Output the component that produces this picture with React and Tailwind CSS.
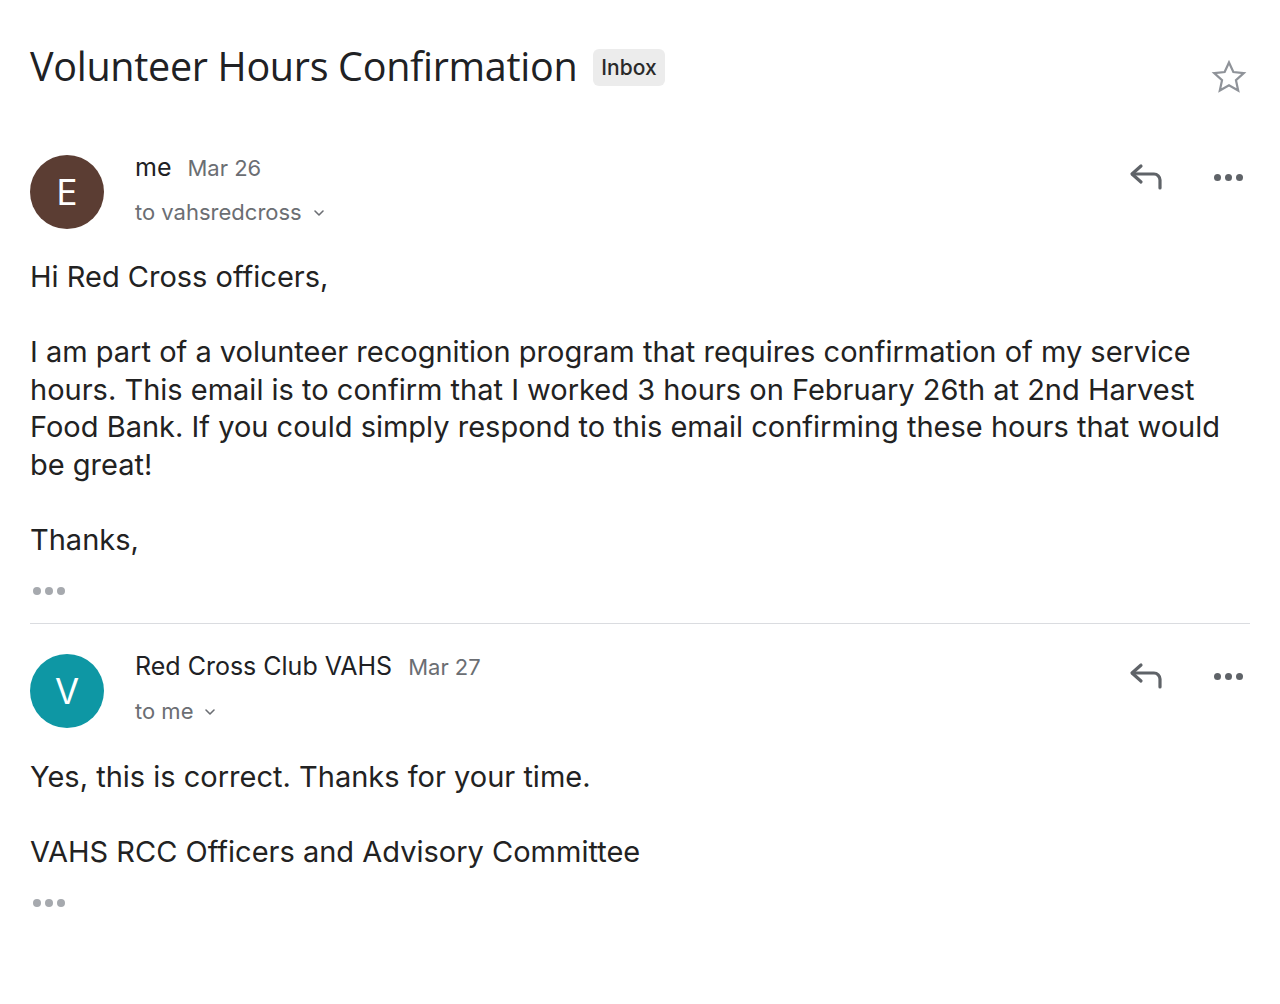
import React from "react";

function Star() {
  return (
    <svg width="38" height="38" viewBox="0 0 24 24" fill="none" stroke="#8f9399" strokeWidth="1.4" strokeLinejoin="miter">
      <path d="M12 2.8l2.75 6.05 6.6.7-4.95 4.45 1.4 6.5L12 17.2l-5.8 3.3 1.4-6.5-4.95-4.45 6.6-.7z" />
    </svg>
  );
}

function Reply() {
  return (
    <svg width="36" height="30" viewBox="0 0 36 30" fill="none" stroke="#5f6368" strokeWidth="3.2" strokeLinecap="round" strokeLinejoin="round">
      <path d="M12 4L3 12l9 8" />
      <path d="M3.5 12H25a6 6 0 0 1 6 6v8" />
    </svg>
  );
}

function Dots({ color = "#5f6368", size = 7, gap = 4 }) {
  return (
    <div className="flex items-center" style={{ gap }}>
      {[0, 1, 2].map((i) => (
        <span key={i} className="rounded-full" style={{ width: size, height: size, background: color }} />
      ))}
    </div>
  );
}

function Chevron() {
  return (
    <svg width="14" height="10" viewBox="0 0 14 10" fill="none" stroke="#6b6e73" strokeWidth="1.6" strokeLinecap="round" strokeLinejoin="round">
      <path d="M3 3l4 4 4-4" />
    </svg>
  );
}

function Header({ letter, bg, name, date, to }) {
  return (
    <div className="flex items-start">
      <div
        className={`w-[74px] h-[74px] rounded-full flex items-center justify-center text-white shrink-0 ${bg}`}
      >
        <span className="text-[35px] leading-none">{letter}</span>
      </div>
      <div className="ml-[31px] flex-1 -mt-[6px]">
        <div className="flex items-baseline">
          <span className="text-[25px] text-[#202124]">{name}</span>
          <span className="ml-[16px] text-[22px] text-[#6b6e73]">{date}</span>
        </div>
        <div className="flex items-center mt-[9px] text-[22px] text-[#6b6e73]">
          <span>{to}</span>
          <span className="ml-[10px] mt-[2px]"><Chevron /></span>
        </div>
      </div>
      <div className="flex items-center pt-[7px]">
        <Reply />
        <div className="ml-[49px] mr-[7px]">
          <Dots />
        </div>
      </div>
    </div>
  );
}

export default function App() {
  return (
    <div
      className="w-[1280px] h-[1004px] bg-white px-[30px] pt-[38px]"
      style={{ fontFamily: "Inter, Roboto, 'Liberation Sans', sans-serif" }}
    >
      <div className="flex items-start">
        <h1
          className="text-[39.5px] leading-[56px] text-[#202124] font-normal tracking-[-0.3px]"
          style={{ fontFamily: "'Open Sans', Roboto, sans-serif" }}
        >
          Volunteer Hours Confirmation
        </h1>
        <span className="ml-[16px] mt-[11px] px-[8px] h-[37px] flex items-center rounded-[6px] bg-[#ececec] text-[21px] font-medium text-[#2a2a2a]">
          Inbox
        </span>
        <div className="ml-auto mt-[20px] mr-[2px]">
          <Star />
        </div>
      </div>

      <div className="mt-[59px]">
        <Header letter="E" bg="bg-[#5b3d33]" name="me" date="Mar 26" to="to vahsredcross" />
        <div className="mt-[29px] text-[29px] leading-[37.5px] text-[#222222]">
          <p>Hi Red Cross officers,</p>
          <p className="mt-[37.5px]">
            I am part of a volunteer recognition program that requires confirmation of my service hours. This email is to confirm that I worked 3 hours on February 26th at 2nd Harvest Food Bank. If you could simply respond to this email confirming these hours that would be great!
          </p>
          <p className="mt-[37.5px]">Thanks,</p>
        </div>
        <div className="mt-[29px] ml-[3px]">
          <Dots color="#a6a9ae" size={8} gap={4} />
        </div>
      </div>

      <div className="mt-[28px] border-t border-[#dadce0]" />

      <div className="mt-[30px]">
        <Header letter="V" bg="bg-[#0e97a4]" name="Red Cross Club VAHS" date="Mar 27" to="to me" />
        <div className="mt-[30px] text-[29px] leading-[37.5px] text-[#222222]">
          <p>Yes, this is correct. Thanks for your time.</p>
          <p className="mt-[37.5px]">VAHS RCC Officers and Advisory Committee</p>
        </div>
        <div className="mt-[28px] ml-[3px]">
          <Dots color="#a6a9ae" size={8} gap={4} />
        </div>
      </div>
    </div>
  );
}
